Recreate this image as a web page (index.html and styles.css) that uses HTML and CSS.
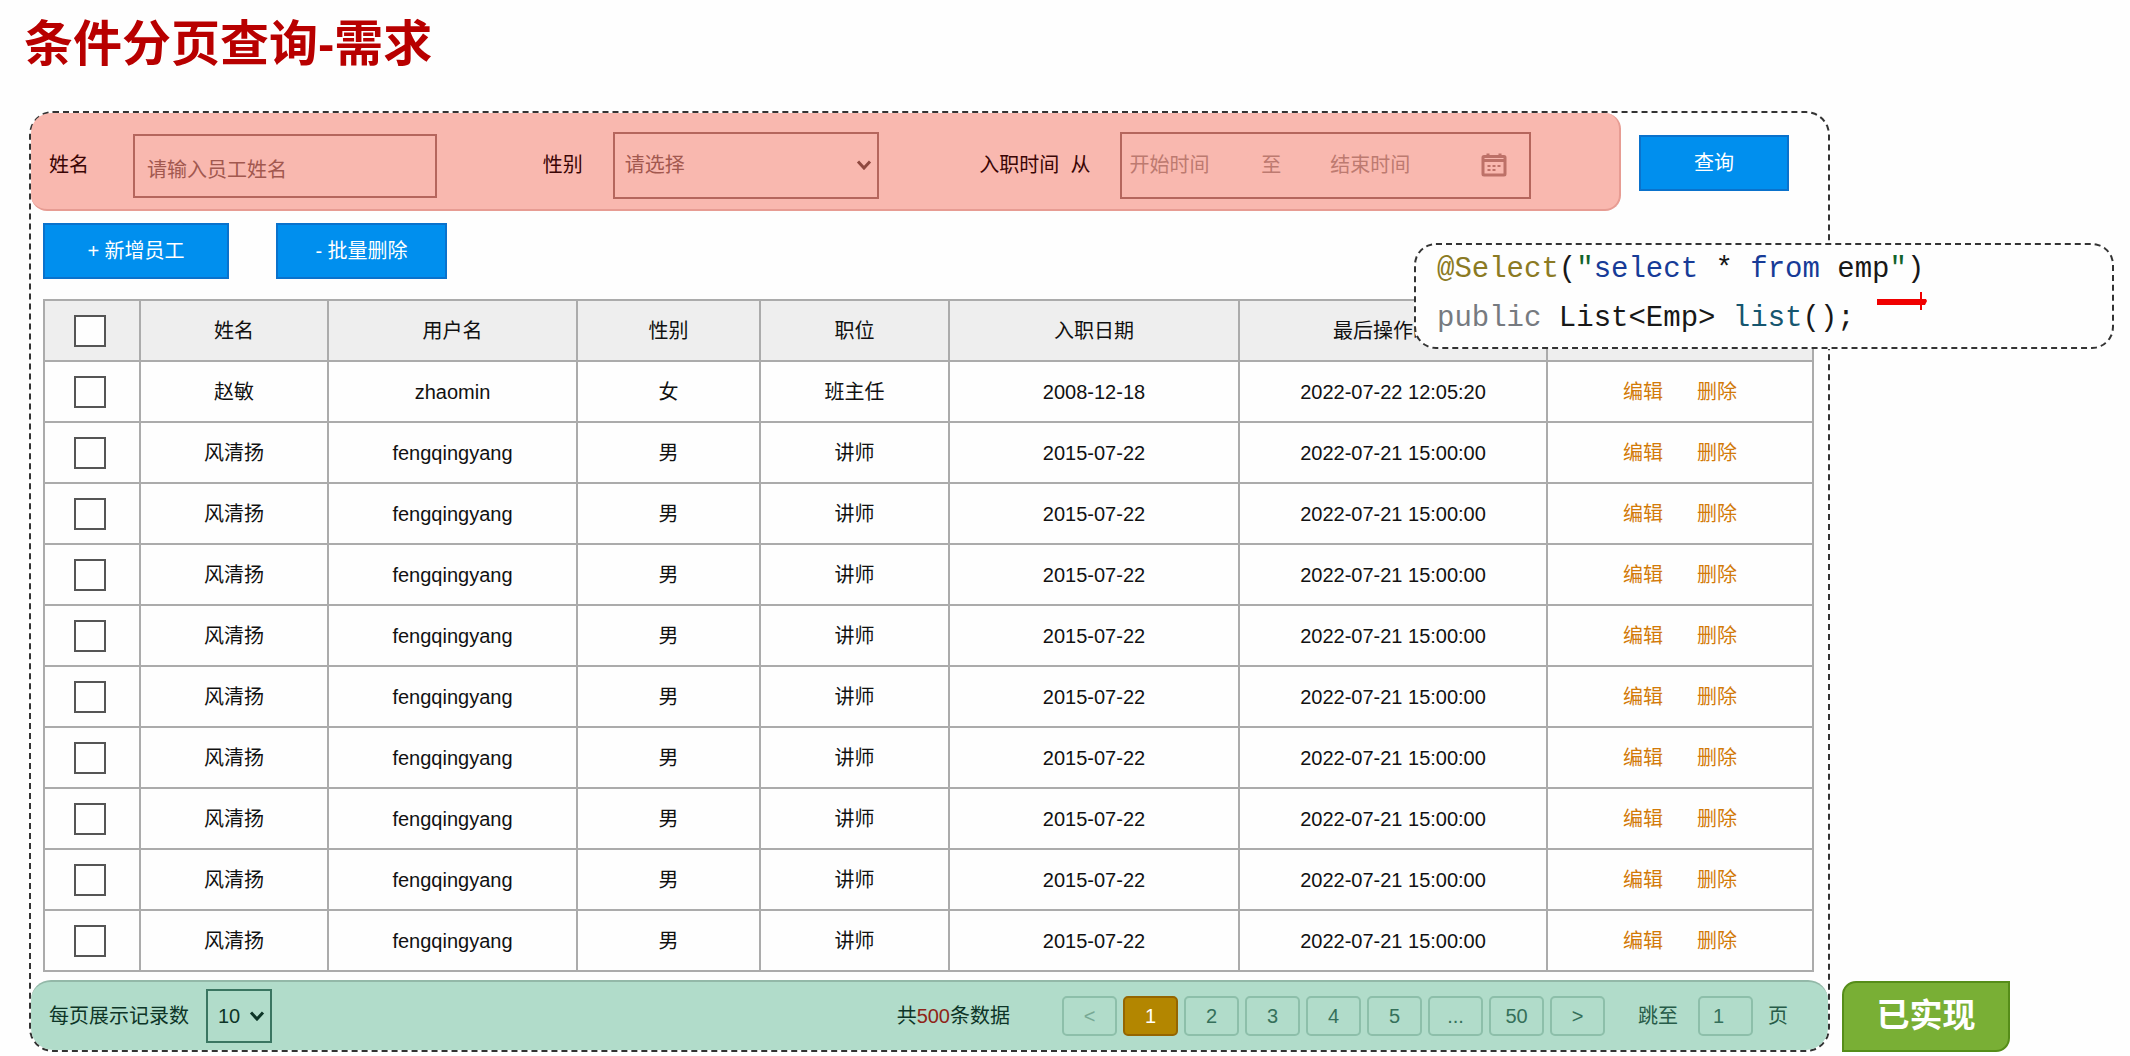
FILE: index.html
```
<!DOCTYPE html>
<html lang="zh-CN">
<head>
<meta charset="utf-8">
<title>条件分页查询-需求</title>
<link rel="stylesheet" href="styles.css">
</head>
<body>
<h1 class="title">条件分页查询-需求</h1>
<main class="stage">
  <section class="panel">
    <form class="search">
      <div class="filters">
        <label class="label" for="name">姓名</label>
        <input class="box name" id="name" type="text" placeholder="请输入员工姓名">
        <label class="label label-gender" for="gender">性别</label>
        <div class="pick gender">
          <select class="box" id="gender"><option>请选择</option><option>男</option><option>女</option></select>
          <svg class="chevron" width="16" height="10" viewBox="0 0 16 10" aria-hidden="true"><path d="M2 1.500 8 8l6-6.500"/></svg>
        </div>
        <label class="label label-date" for="begin">入职时间&nbsp; 从</label>
        <div class="box range">
          <input class="date begin" id="begin" type="text" placeholder="开始时间">
          <label class="to" for="end">至</label>
          <input class="date end" id="end" type="text" placeholder="结束时间">
          <svg class="calendar" width="26" height="24" viewBox="0 0 26 24" aria-hidden="true">
            <rect x="2" y="3.500" width="22" height="18.500" rx="1"/>
            <path d="M2 7.500h22M7 0.500v4M19 0.500v4"/>
            <path class="dots" d="M6.500 13h13M6.500 17h8.500"/>
          </svg>
        </div>
      </div>
      <button class="btn btn-query" type="button">查询</button>
    </form>
    <div class="toolbar">
      <button class="btn btn-add" type="button">+ 新增员工</button>
      <button class="btn btn-remove" type="button">- 批量删除</button>
    </div>
    <table class="grid">
      <colgroup><col class="c-check"><col class="c-name"><col class="c-user"><col class="c-sex"><col class="c-job"><col class="c-entry"><col class="c-update"><col class="c-action"></colgroup>
      <thead>
        <tr><th><input type="checkbox" aria-label="全选"></th><th>姓名</th><th>用户名</th><th>性别</th><th>职位</th><th>入职日期</th><th>最后操作时间</th><th>操作</th></tr>
      </thead>
      <tbody>
        <tr><td><input type="checkbox" aria-label="选择"></td><td>赵敏</td><td>zhaomin</td><td>女</td><td>班主任</td><td>2008-12-18</td><td>2022-07-22 12:05:20</td><td><a href="#">编辑</a><a href="#">删除</a></td></tr>
        <tr><td><input type="checkbox" aria-label="选择"></td><td>风清扬</td><td>fengqingyang</td><td>男</td><td>讲师</td><td>2015-07-22</td><td>2022-07-21 15:00:00</td><td><a href="#">编辑</a><a href="#">删除</a></td></tr>
        <tr><td><input type="checkbox" aria-label="选择"></td><td>风清扬</td><td>fengqingyang</td><td>男</td><td>讲师</td><td>2015-07-22</td><td>2022-07-21 15:00:00</td><td><a href="#">编辑</a><a href="#">删除</a></td></tr>
        <tr><td><input type="checkbox" aria-label="选择"></td><td>风清扬</td><td>fengqingyang</td><td>男</td><td>讲师</td><td>2015-07-22</td><td>2022-07-21 15:00:00</td><td><a href="#">编辑</a><a href="#">删除</a></td></tr>
        <tr><td><input type="checkbox" aria-label="选择"></td><td>风清扬</td><td>fengqingyang</td><td>男</td><td>讲师</td><td>2015-07-22</td><td>2022-07-21 15:00:00</td><td><a href="#">编辑</a><a href="#">删除</a></td></tr>
        <tr><td><input type="checkbox" aria-label="选择"></td><td>风清扬</td><td>fengqingyang</td><td>男</td><td>讲师</td><td>2015-07-22</td><td>2022-07-21 15:00:00</td><td><a href="#">编辑</a><a href="#">删除</a></td></tr>
        <tr><td><input type="checkbox" aria-label="选择"></td><td>风清扬</td><td>fengqingyang</td><td>男</td><td>讲师</td><td>2015-07-22</td><td>2022-07-21 15:00:00</td><td><a href="#">编辑</a><a href="#">删除</a></td></tr>
        <tr><td><input type="checkbox" aria-label="选择"></td><td>风清扬</td><td>fengqingyang</td><td>男</td><td>讲师</td><td>2015-07-22</td><td>2022-07-21 15:00:00</td><td><a href="#">编辑</a><a href="#">删除</a></td></tr>
        <tr><td><input type="checkbox" aria-label="选择"></td><td>风清扬</td><td>fengqingyang</td><td>男</td><td>讲师</td><td>2015-07-22</td><td>2022-07-21 15:00:00</td><td><a href="#">编辑</a><a href="#">删除</a></td></tr>
        <tr><td><input type="checkbox" aria-label="选择"></td><td>风清扬</td><td>fengqingyang</td><td>男</td><td>讲师</td><td>2015-07-22</td><td>2022-07-21 15:00:00</td><td><a href="#">编辑</a><a href="#">删除</a></td></tr>
      </tbody>
    </table>
    <footer class="pager">
      <label for="size">每页展示记录数</label>
      <div class="pick size">
        <select id="size"><option>10</option><option>20</option><option>50</option></select>
        <svg class="chevron" width="16" height="10" viewBox="0 0 16 10" aria-hidden="true"><path d="M2 1.500 8 8l6-6.500"/></svg>
      </div>
      <p class="total">共<b>500</b>条数据</p>
      <nav class="pages" aria-label="分页">
        <button class="prev" type="button">&lt;</button>
        <button class="current" type="button">1</button>
        <button type="button">2</button>
        <button type="button">3</button>
        <button type="button">4</button>
        <button type="button">5</button>
        <button type="button">...</button>
        <button type="button">50</button>
        <button type="button">&gt;</button>
      </nav>
      <label class="jump" for="page">跳至</label>
      <input class="page-input" id="page" type="text" value="1">
      <span class="unit">页</span>
    </footer>
  </section>
  <strong class="done">已实现</strong>
  <aside class="note">
    <pre class="code"><span class="anno">@Select</span>(<span class="quote">"</span><span class="sql">select</span> * <span class="sql">from</span> emp<span class="quote">"</span>)
<span class="mod">public</span> List&lt;Emp&gt; <span class="fn">list</span>();</pre>
    <svg class="stroke" width="52" height="20" viewBox="0 0 52 20" aria-hidden="true"><path d="M1 8h49l1 2-2 4H1zM44 1h2v18h-2z"/></svg>
  </aside>
</main>
</body>
</html>
```
FILE: styles.css
```
* { box-sizing: border-box; }
body {
  margin: 0;
  background: #fefefe;
  color: #111;
  font: 20px/28px "Liberation Sans", "Noto Sans CJK SC", sans-serif;
}
button, input, select { font: inherit; color: inherit; margin: 0; }

.title {
  margin: 0;
  padding: 8px 24px 31px;
  color: #b80000;
  font-size: 49px;
  line-height: 72px;
  font-weight: 700;
}

.stage {
  position: relative;
  display: flex;
  align-items: flex-end;
  gap: 12px;
  padding: 0 120px 2px 29px;
}
.panel {
  flex: 1;
  min-width: 0;
  border: 2px dashed #333;
  border-radius: 24px;
}

/* search row */
.search { display: flex; align-items: flex-start; padding-right: 39px; }
.filters {
  flex: 1;
  display: flex;
  align-items: center;
  height: 98px;
  margin-right: 18px;
  padding: 8px 88px 0 18px;
  border: solid #e79c93;
  border-width: 0 2px 2px 0;
  border-radius: 20px 16px 16px 16px;
  background: #f9b8af;
  color: #3a0505;
}
.label { white-space: nowrap; }
.box {
  min-width: 0;
  height: 67px;
  border: 2px solid #b5665d;
  background: transparent;
  color: #a2584f;
}
.box::placeholder, .date::placeholder { color: inherit; opacity: 1; }
.name { flex: 1 1 304px; height: 64px; margin: 2px 0 0 44px; padding: 8px 12px 0; }
.label-gender { margin-left: 106px; }
.pick { position: relative; display: flex; align-items: center; }
.pick select { width: 100%; appearance: none; border-radius: 0; }
.gender { flex: 1 1 267px; margin-left: 30px; }
.gender select { padding: 0 40px 0 10px; }
.chevron {
  position: absolute;
  right: 7px;
  fill: none;
  stroke: #8f4940;
  stroke-width: 3;
  pointer-events: none;
}
.label-date { margin-left: 100px; }
.range { flex: 1 1 411px; display: flex; align-items: center; margin-left: 30px; padding: 0 22px 0 7px; color: #bd7a70; }
.date { min-width: 0; width: 0; padding: 0; border: 0; background: transparent; }
.begin { flex: 132; }
.end { flex: 151; }
.to { margin-right: 49px; }
.calendar { fill: none; stroke: #bd7168; stroke-width: 3; }
.calendar .dots { stroke-width: 2; stroke-dasharray: 3 2; }

/* action buttons */
.btn {
  height: 56px;
  padding: 0;
  border: 2px solid #0a72cc;
  background: #008fee;
  color: #fff;
}
.btn-query { width: 150px; margin-top: 22px; }
.toolbar { display: flex; gap: 47px; padding: 12px 12px 20px; }
.btn-add { width: 186px; }
.btn-remove { width: 171px; }

/* employee table */
.grid {
  width: calc(100% - 30px);
  margin: 0 18px 8px 12px;
  border-collapse: collapse;
  table-layout: fixed;
  text-align: center;
}
.c-check { width: 96px; }
.c-name { width: 188px; }
.c-user { width: 249px; }
.c-sex { width: 183px; }
.c-job { width: 189px; }
.c-entry { width: 290px; }
.c-update { width: 308px; }
.c-action { width: 266px; }
th, td {
  height: 61px;
  padding: 0;
  border: 2px solid #ababab;
  font-weight: 400;
}
th { background: #eee; }
td a { color: #d27a08; text-decoration: none; }
td a + a { margin-left: 34px; }
input[type="checkbox"] {
  appearance: none;
  display: block;
  width: 32px;
  height: 32px;
  margin: 0 0 0 29px;
  border: 2px solid #555;
  background: #fefefe;
}

/* pager */
.pager {
  display: flex;
  align-items: center;
  height: 70px;
  padding: 0 40px 0 18px;
  border-top: 2px solid #93b8a8;
  border-radius: 20px 20px 22px 22px;
  background: #b1dcca;
  color: #0d3527;
}
.size { width: 66px; margin-left: 17px; }
.size select { height: 54px; padding: 0 0 0 10px; border: 2px solid #3a7561; background: transparent; }
.size .chevron { stroke: #0d3527; }
.total { margin: 0 52px 0 auto; }
.total b { font-weight: 400; color: #8f2417; }
.pages { display: flex; gap: 6px; }
.pages button, .page-input {
  width: 55px;
  height: 40px;
  padding: 0;
  border: 2px solid #8dbfaa;
  border-radius: 5px;
  background: transparent;
  color: #35705a;
}
.pages .prev { color: #78a995; }
.pages .current { border-color: #956500; background: #b38600; color: #fff; }
.jump { margin: 0 20px 0 33px; color: #285c49; }
.page-input { padding-left: 13px; }
.unit { margin-left: 15px; color: #285c49; }

/* annotations */
.done {
  width: 168px;
  height: 71px;
  border: 2px solid #568d19;
  border-radius: 14px 0;
  background: #79af35;
  color: #fff;
  font-size: 33px;
  line-height: 66px;
  text-align: center;
}
.note {
  position: absolute;
  top: 132px;
  right: 16px;
  width: 700px;
  padding: 0 21px 4px;
  border: 2px dashed #333;
  border-radius: 22px;
  background: #fefefe;
}
.code {
  margin: 0;
  color: #181818;
  font: 29px/49px "Liberation Mono", monospace;
}
.anno { color: #8b7a23; }
.quote { color: #12632b; }
.sql { color: #173b97; }
.mod { color: #767a80; }
.fn { color: #16566f; }
.stroke { position: absolute; top: 46px; left: 460px; fill: #f00000; }
```
